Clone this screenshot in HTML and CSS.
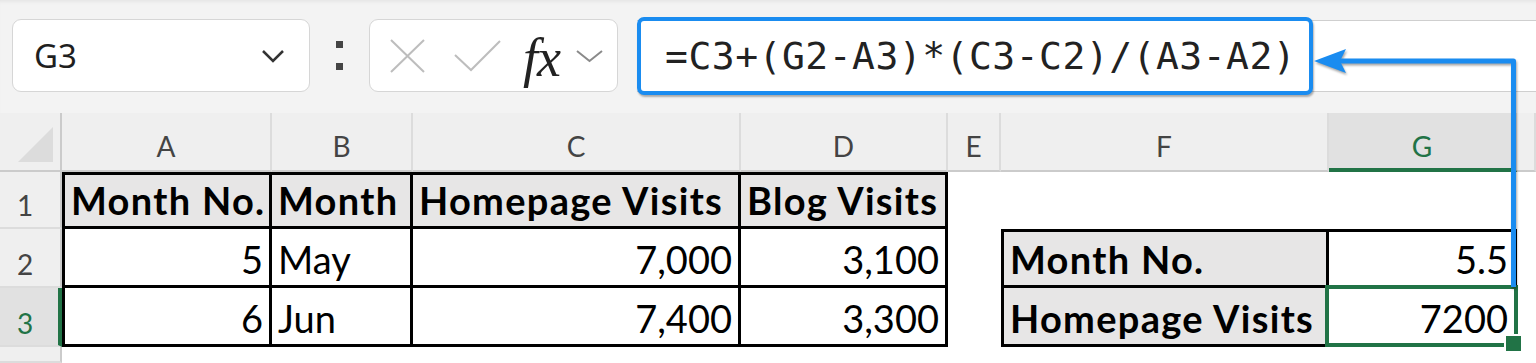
FILE: index.html
```html
<!DOCTYPE html>
<html lang="en">
<head>
    <meta charset="UTF-8">
    <title>Linear interpolation</title>
    <link rel="stylesheet" href="styles.css">
</head>
<body>
    <div class="app">
        <div class="bar">
            <div class="namebox">
                <span class="ref">G3</span>
                <svg class="dd" width="24" height="14" viewBox="0 0 24 14"><polyline points="2,2 12,12 22,2"/></svg>
            </div>
            <div class="grip"><i></i><i></i></div>
            <div class="fbtns">
                <svg class="ico-x" width="37" height="34" viewBox="0 0 37 34"><path d="M2 1 L35 33 M35 1 L2 33"/></svg>
                <svg class="ico-ok" width="47" height="32" viewBox="0 0 47 32"><path d="M1 15 L17 30 L46 1"/></svg>
                <span class="fx">fx</span>
                <svg class="dd small" width="29" height="14" viewBox="0 0 29 14"><polyline points="2,2 14.5,12 27,2"/></svg>
            </div>
            <div class="fline">
                <div class="formula">=C3+(G2-A3)*(C3-C2)/(A3-A2)</div>
            </div>
        </div>

        <div class="sheet">
            <div class="corner"><i></i></div>
            <div class="ch">A</div>
            <div class="ch">B</div>
            <div class="ch">C</div>
            <div class="ch">D</div>
            <div class="ch">E</div>
            <div class="ch">F</div>
            <div class="ch cur">G</div>
            <div class="ch"></div>

            <div class="rh">1</div>
            <div class="c b bl bt hd">Month No.</div>
            <div class="c b bt hd">Month</div>
            <div class="c b bt hd">Homepage Visits</div>
            <div class="c b bt hd">Blog Visits</div>
            <div class="c"></div>
            <div class="c"></div>
            <div class="c"></div>
            <div class="c"></div>

            <div class="rh">2</div>
            <div class="c b bl num">5</div>
            <div class="c b">May</div>
            <div class="c b num">7,000</div>
            <div class="c b num">3,100</div>
            <div class="c"></div>
            <div class="c b bl bt hd">Month No.</div>
            <div class="c b bt num">5.5</div>
            <div class="c"></div>

            <div class="rh cur">3</div>
            <div class="c b bl num">6</div>
            <div class="c b">Jun</div>
            <div class="c b num">7,400</div>
            <div class="c b num">3,300</div>
            <div class="c"></div>
            <div class="c b bl hd">Homepage Visits</div>
            <div class="c b num active">7200<span class="sel"></span><span class="handle"></span></div>
            <div class="c"></div>

            <div class="rh"></div>
            <div class="c"></div>
            <div class="c"></div>
            <div class="c"></div>
            <div class="c"></div>
            <div class="c"></div>
            <div class="c"></div>
            <div class="c"></div>
            <div class="c"></div>
        </div>

        <!-- trace precedents arrow -->
        <svg class="trace" width="1536" height="363" viewBox="0 0 1536 363">
            <path d="M1513.5 287 V61 H1338"/>
            <polygon points="1314,61 1346,49 1340,61 1346,73"/>
        </svg>
    </div>
</body>
</html>
```

FILE: styles.css
```css
*{
    margin: 0;
    padding: 0;
    box-sizing: border-box;
}
body{
    background: #f3f3f3;
    font-family: Lato, "Noto Sans", sans-serif;
    overflow: hidden;
}
.app{
    position: relative;
    width: 1536px;
    height: 363px;
}

/* formula bar */
.bar{
    display: flex;
    align-items: flex-start;
    height: 113px;
    padding: 19px 0 0 12px;
    background: #f3f3f3;
    box-shadow: inset 0 4px 4px -3px rgba(0,0,0,0.08);
}
.namebox{
    display: flex;
    align-items: center;
    width: 298px;
    height: 73px;
    padding: 0 24px 0 21px;
    background: #fff;
    border: 1px solid #d6d6d6;
    border-radius: 9px;
    font-family: "Noto Sans", sans-serif;
    font-size: 33px;
    color: #1f1f1f;
}
.ref{
    flex: 1;
}
.dd polyline{
    fill: none;
    stroke: #333;
    stroke-width: 2.5;
}
.dd.small polyline{
    stroke: #8a8a8a;
    stroke-width: 2;
}
.grip{
    display: flex;
    flex-direction: column;
    align-items: center;
    justify-content: center;
    gap: 15px;
    width: 59px;
    height: 73px;
}
.grip i{
    width: 7px;
    height: 7px;
    background: #444;
}
.fbtns{
    display: flex;
    align-items: center;
    width: 249px;
    height: 73px;
    padding-left: 19px;
    background: #fff;
    border: 1px solid #d6d6d6;
    border-radius: 9px;
}
.ico-x, .ico-ok{
    fill: none;
    stroke: #bdbdbd;
    stroke-width: 2;
}
.ico-x{
    margin-right: 28px;
}
.ico-ok{
    margin-right: 22px;
}
.fx{
    width: 52px;
    padding-top: 4px;
    font-family: "Liberation Serif", serif;
    font-style: italic;
    font-size: 54px;
    line-height: 1;
    color: #222;
    letter-spacing: -1px;
}
.fline{
    flex: 1;
    height: 72px;
    margin: 1px 0 0 19px;
    background: #fff;
    border-top: 1px solid #cfcfcf;
    border-bottom: 1px solid #cfcfcf;
}
.formula{
    display: flex;
    align-items: center;
    width: 676px;
    height: 78px;
    margin-top: -4px;
    padding-left: 24px;
    background: #fff;
    border: 4px solid #1a8cf0;
    border-radius: 7px;
    box-shadow: 1px 2px 2px rgba(0,0,0,0.3);
    font-family: "DejaVu Sans Mono", monospace;
    font-size: 38px;
    letter-spacing: 0.5px;
    color: #222;
    white-space: nowrap;
}

/* grid */
.sheet{
    display: grid;
    grid-template-columns: 62px 210px 141px 328px 207px 53px 328px 188px 1fr;
    grid-template-rows: 59px 57px 59px 59px 1fr;
    height: 250px;
    background: #fff;
}
.corner, .ch, .rh{
    background: #efefef;
    color: #444;
    font-size: 28px;
}
.corner{
    display: flex;
    align-items: flex-end;
    justify-content: flex-end;
    padding: 0 7px 8px 0;
    border-right: 2px solid #cbcbcb;
    border-bottom: 2px solid #cbcbcb;
}
.corner i{
    width: 0;
    height: 0;
    border-left: 35px solid transparent;
    border-bottom: 35px solid #dcdcdc;
}
.ch{
    display: flex;
    align-items: flex-end;
    justify-content: center;
    padding-bottom: 7px;
    border-right: 2px solid #dcdcdc;
    border-bottom: 2px solid #cbcbcb;
}
.ch.cur{
    background: #e1e1e1;
    color: #217346;
    border-bottom: 4px solid #217346;
    padding-bottom: 5px;
}
.rh{
    display: flex;
    align-items: flex-end;
    justify-content: center;
    padding: 0 10px 5px 0;
    border-right: 2px solid #cbcbcb;
    border-bottom: 2px solid #dcdcdc;
}
.rh.cur{
    background: #e1e1e1;
    color: #217346;
    border-right: 4px solid #217346;
    padding-right: 8px;
}
.c{
    position: relative;
    display: flex;
    align-items: flex-end;
    padding: 0 6px 3px;
    font-size: 38px;
    color: #000;
    white-space: nowrap;
}
.c.b{
    border-right: 3px solid #000;
    border-bottom: 3px solid #000;
}
.c.bl{
    border-left: 3px solid #000;
}
.c.bt{
    border-top: 3px solid #000;
}
.c.hd{
    background: #e7e6e6;
    font-weight: 700;
    letter-spacing: 1.3px;
}
.c.num{
    justify-content: flex-end;
}
.sel{
    position: absolute;
    left: -4px;
    top: -3px;
    right: -4px;
    bottom: -3px;
    border: 4px solid #217346;
}
.handle{
    position: absolute;
    right: -7px;
    bottom: -7px;
    width: 15px;
    height: 15px;
    background: #217346;
    box-shadow: 0 0 0 2px #fff;
}

/* precedents arrow */
.trace{
    position: absolute;
    left: 0;
    top: 0;
    pointer-events: none;
    filter: drop-shadow(1px 2px 1px rgba(0,0,0,0.35));
}
.trace path{
    fill: none;
    stroke: #1a8cf0;
    stroke-width: 5;
    stroke-linejoin: round;
}
.trace polygon{
    fill: #1a8cf0;
}
```
